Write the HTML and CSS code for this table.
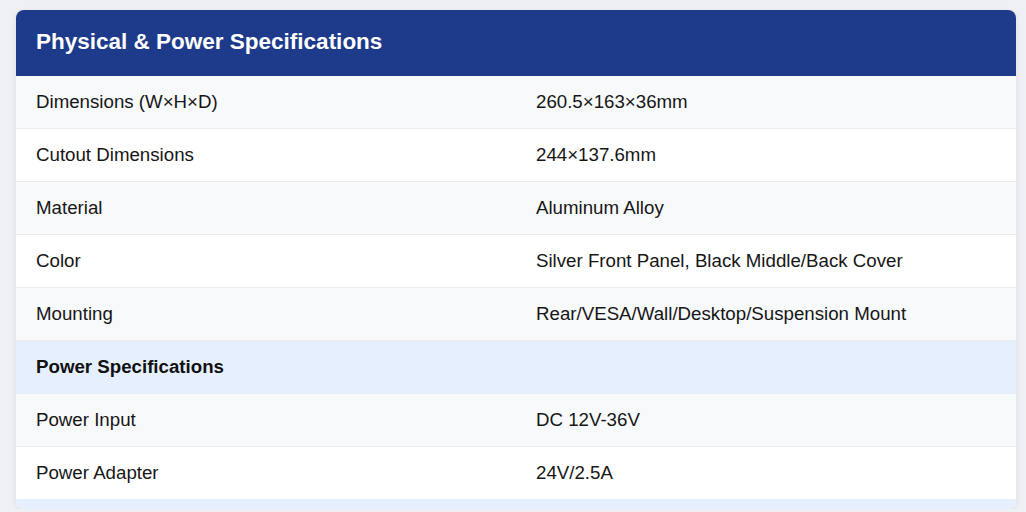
FILE: index.html
```html
<!DOCTYPE html>
<html lang="en">
<head>
<meta charset="utf-8">
<title>Physical &amp; Power Specifications</title>
<link rel="stylesheet" href="styles.css">
</head>
<body>
<div class="card">
  <div class="card-header">Physical &amp; Power Specifications</div>
  <table class="spec">
    <tbody>
      <tr><td>Dimensions (W×H×D)</td><td>260.5×163×36mm</td></tr>
      <tr><td>Cutout Dimensions</td><td>244×137.6mm</td></tr>
      <tr><td>Material</td><td>Aluminum Alloy</td></tr>
      <tr><td>Color</td><td>Silver Front Panel, Black Middle/Back Cover</td></tr>
      <tr><td>Mounting</td><td>Rear/VESA/Wall/Desktop/Suspension Mount</td></tr>
      <tr class="section"><td colspan="2">Power Specifications</td></tr>
      <tr><td>Power Input</td><td>DC 12V-36V</td></tr>
      <tr><td>Power Adapter</td><td>24V/2.5A</td></tr>
    </tbody>
  </table>
  <div class="card-foot"></div>
</div>
</body>
</html>
```
FILE: styles.css
```css
html, body {
  margin: 0;
  padding: 0;
}
body {
  background: #eef0f4;
  padding: 10px 10px 0 16px;
  font-family: "Liberation Sans", Arial, sans-serif;
  color: #161616;
}
.card {
  width: 1000px;
  background: #ffffff;
  border-radius: 8px;
  overflow: hidden;
  box-shadow: 0 2px 6px rgba(0, 0, 0, 0.08);
}
.card-header {
  background: #1e3a8a;
  color: #ffffff;
  font-weight: bold;
  font-size: 22.5px;
  line-height: 26px;
  padding: 19px 20px 21px;
}
.spec {
  width: 100%;
  border-collapse: collapse;
  table-layout: fixed;
}
.spec td {
  padding: 0 20px;
  height: 52px;
  font-size: 18.7px;
  line-height: 22px;
  border-bottom: 1px solid #e9ebee;
  vertical-align: middle;
}
.spec tr:nth-child(odd) td {
  background: #f8f9fb;
}
.spec tr:nth-child(even) td {
  background: #ffffff;
}
.spec tr.section td {
  background: #e6effd;
  font-weight: bold;
  color: #111111;
  border-bottom: 1px solid #e6effd;
}
.spec tr:last-child td {
  border-bottom: none;
}
.card-foot {
  height: 10px;
  background: #e6effd;
}
```
